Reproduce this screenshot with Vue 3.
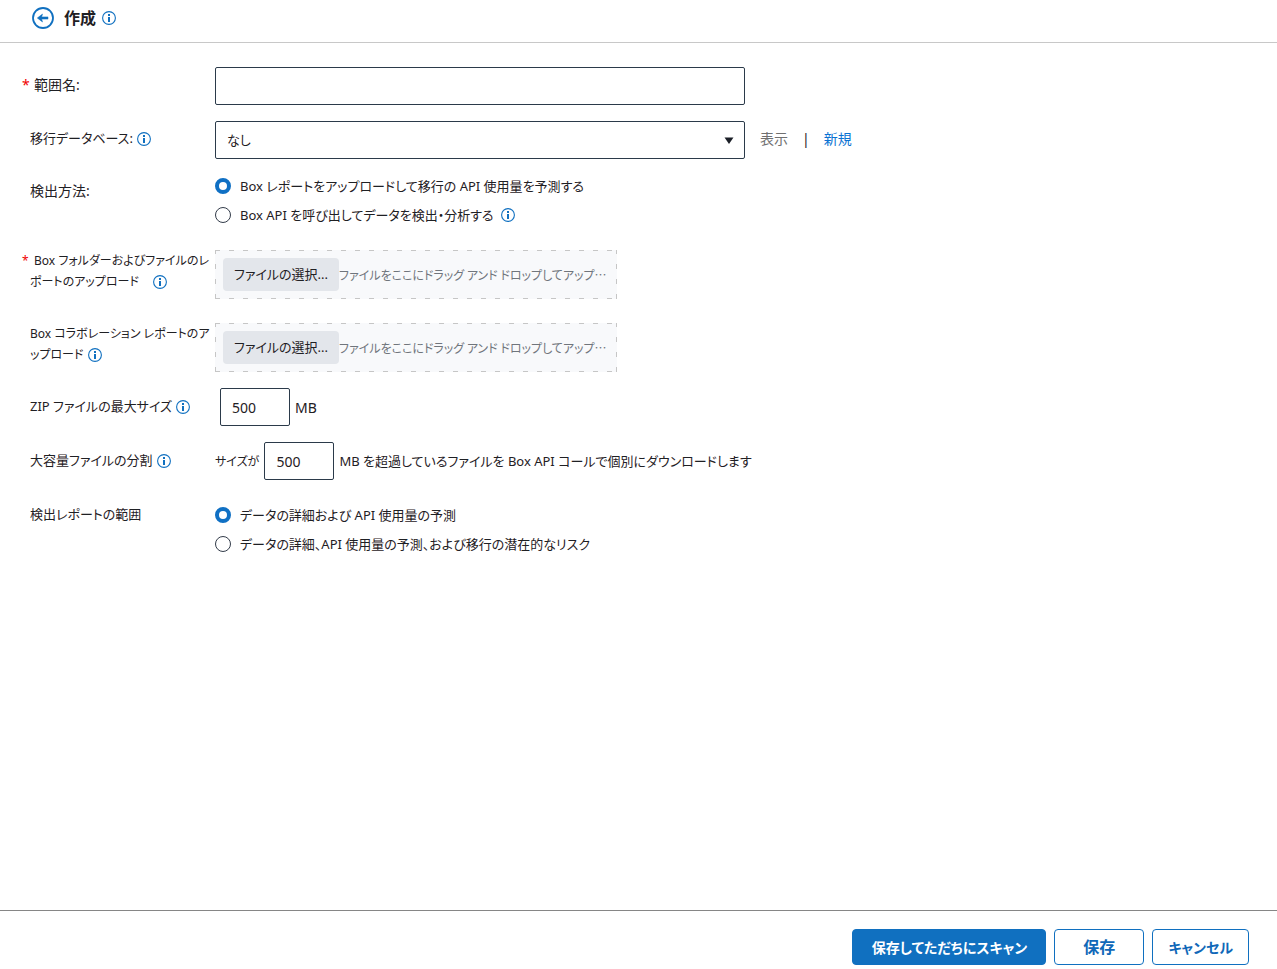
<script setup>
import { ref, h } from 'vue'

const InfoIcon = () =>
  h('svg', { class: 'info', viewBox: '0 0 14 14', width: 14, height: 14, 'aria-hidden': 'true' }, [
    h('circle', { cx: 7, cy: 7, r: 6.4, fill: 'none', stroke: '#1070c0', 'stroke-width': 1.1 }),
    h('path', { d: 'M6 3h2v2H6zM6 6h2v5H6z', fill: '#1070c0' })
  ])

const name = ref('')
const database = ref('none')
const method = ref('report')
const zipSize = ref('500')
const splitSize = ref('500')
const range = ref('basic')
</script>

<template>
  <div class="page">
    <header class="header">
      <button class="back" type="button" aria-label="戻る">
        <svg viewBox="0 0 22 22" width="22" height="22">
          <circle cx="11" cy="11" r="10" fill="none" stroke="#1070c0" stroke-width="1.8" />
          <path d="M5.3 11l5.200-4-.8 2.900H16v2.200H9.700l.8 2.900z" fill="#1070c0" stroke="#1070c0" stroke-width=".5" stroke-linejoin="round" />
        </svg>
      </button>
      <h1>作成</h1>
      <InfoIcon />
    </header>

    <main class="form">
      <div class="row">
        <label class="label field-label large" for="name"><span class="star">*</span>範囲名:</label>
        <input id="name" v-model="name" class="box wide" type="text" />
      </div>

      <div class="row">
        <div class="label field-label"><label for="database">移行データベース:</label><InfoIcon /></div>
        <div class="inline">
          <div class="select-wrap wide">
            <select id="database" v-model="database" class="box">
              <option value="none">なし</option>
            </select>
            <svg class="arrow" viewBox="0 0 10 7" width="10" height="7"><path d="M0.500 0.500h9L5 7z" fill="#1b1f27" /></svg>
          </div>
          <div class="links large">
            <a class="muted" href="#">表示</a>
            <span>|</span>
            <a href="#">新規</a>
          </div>
        </div>
      </div>

      <div class="row">
        <div id="method-label" class="label group-label large">検出方法:</div>
        <div class="radios" role="radiogroup" aria-labelledby="method-label">
          <label class="radio"><input v-model="method" type="radio" name="method" value="report" />Box レポートをアップロードして移行の API 使用量を予測する</label>
          <div class="radio-line">
            <label class="radio"><input v-model="method" type="radio" name="method" value="api" />Box API を呼び出してデータを検出・分析する</label>
            <InfoIcon />
          </div>
        </div>
      </div>

      <div class="row spaced">
        <div class="label compact"><label for="folder-report"><span class="star">*</span>Box フォルダーおよびファイルのレ<br />ポートのアップロード</label><InfoIcon class="far" /></div>
        <div class="drop">
          <button id="folder-report" class="choose" type="button">ファイルの選択...</button>
          <span class="hint">ファイルをここにドラッグ アンド ドロップしてアップ…</span>
        </div>
      </div>

      <div class="row spaced">
        <div class="label compact"><label for="collab-report">Box コラボレーション レポートのア<br />ップロード</label><InfoIcon /></div>
        <div class="drop">
          <button id="collab-report" class="choose" type="button">ファイルの選択...</button>
          <span class="hint">ファイルをここにドラッグ アンド ドロップしてアップ…</span>
        </div>
      </div>

      <div class="row">
        <div class="label size-label"><label for="zip">ZIP ファイルの最大サイズ</label><InfoIcon /></div>
        <div class="inline size zip">
          <input id="zip" v-model="zipSize" class="box small" type="text" />
          <span class="large">MB</span>
        </div>
      </div>

      <div class="row">
        <div class="label size-label"><label for="split">大容量ファイルの分割</label><InfoIcon /></div>
        <div class="inline size">
          <span class="compact">サイズが</span>
          <input id="split" v-model="splitSize" class="box small" type="text" />
          <span>MB を超過しているファイルを Box API コールで個別にダウンロードします</span>
        </div>
      </div>

      <div class="row spaced">
        <div id="range-label" class="label">検出レポートの範囲</div>
        <div class="radios" role="radiogroup" aria-labelledby="range-label">
          <label class="radio"><input v-model="range" type="radio" name="range" value="basic" />データの詳細および API 使用量の予測</label>
          <label class="radio"><input v-model="range" type="radio" name="range" value="risk" />データの詳細、API 使用量の予測、および移行の潜在的なリスク</label>
        </div>
      </div>
    </main>

    <footer class="footer">
      <button class="btn primary" type="button">保存してただちにスキャン</button>
      <button class="btn save" type="button">保存</button>
      <button class="btn" type="button">キャンセル</button>
    </footer>
  </div>
</template>

<style>
body {
  margin: 0;
  background: #fff;
}
</style>

<style scoped>
.page {
  display: flex;
  flex-direction: column;
  min-height: 100vh;
  font-family: "Noto Sans", "Noto Sans CJK JP", sans-serif;
  font-feature-settings: "palt";
  font-size: 13px;
  line-height: 21px;
  color: #1f2024;
}
.page * {
  box-sizing: border-box;
}
button,
input,
select {
  font: inherit;
  font-feature-settings: inherit;
  color: inherit;
  margin: 0;
}
.large {
  font-size: 14px;
}
.compact {
  font-size: 12px;
}
.header {
  display: flex;
  align-items: center;
  height: 43px;
  padding: 0 32px 6px;
  border-bottom: 1px solid #c8c8c8;
}
.back {
  display: flex;
  padding: 0;
  border: 0;
  background: none;
}
h1 {
  margin: 0 6px 0 10px;
  font-size: 16px;
  line-height: 24px;
  font-weight: 700;
}
.form {
  flex: 1;
  display: flex;
  flex-direction: column;
  gap: 16px;
  padding: 24px 0;
}
.row {
  display: grid;
  grid-template-columns: 185px minmax(0, 1fr);
  padding-left: 30px;
}
.spaced {
  margin-top: 8px;
}
.label {
  white-space: nowrap;
}
.field-label {
  padding-top: 7px;
}
.size-label {
  padding-top: 8px;
}
.group-label {
  padding-top: 5px;
}
.star {
  display: inline-block;
  width: 12px;
  margin-left: -8px;
  color: #f00000;
}
.info {
  flex: none;
  vertical-align: -3px;
}
.label .info {
  margin-left: 4px;
}
.label .far {
  margin-left: 14px;
}
.box {
  height: 38px;
  padding: 0 11px;
  border: 1px solid #2b3a4a;
  border-radius: 2px;
  background: #fff;
  font-size: 14px;
}
.wide {
  width: 100%;
  max-width: 530px;
}
.inline {
  display: flex;
  align-items: center;
}
.select-wrap {
  position: relative;
}
.select-wrap .box {
  display: block;
  width: 100%;
  appearance: none;
  font-size: 13px;
}
.arrow {
  position: absolute;
  right: 11px;
  top: 16px;
  pointer-events: none;
}
.links {
  display: flex;
  gap: 14px;
  margin-left: 15px;
  padding-bottom: 4px;
}
a {
  color: #0972d3;
  text-decoration: none;
}
.muted {
  color: #707070;
}
.radios {
  display: flex;
  flex-direction: column;
  align-items: flex-start;
  gap: 7px;
}
.radio,
.radio-line {
  display: flex;
  align-items: center;
  height: 22px;
}
.radio-line {
  gap: 7px;
}
.radio input {
  appearance: none;
  width: 16px;
  height: 16px;
  margin-right: 9px;
  border: 1px solid #333c4a;
  border-radius: 50%;
  background: #fff;
}
.radio input:checked {
  border: 4px solid #1070c4;
}
.drop {
  display: flex;
  align-items: center;
  width: 100%;
  max-width: 402px;
  height: 49px;
  padding: 0 8px;
  background:
    repeating-linear-gradient(90deg, #c6c6c6 0 5px, transparent 5px 14px) 0 0 / 100% 1px no-repeat,
    repeating-linear-gradient(90deg, #c6c6c6 0 5px, transparent 5px 14px) 0 100% / 100% 1px no-repeat,
    repeating-linear-gradient(0deg, #c6c6c6 0 5px, transparent 5px 15px) 0 0 / 1px 100% no-repeat,
    repeating-linear-gradient(0deg, #c6c6c6 0 5px, transparent 5px 15px) 100% 0 / 1px 100% no-repeat,
    #f8f9fb;
}
.choose {
  flex: none;
  width: 116px;
  height: 33px;
  padding: 0;
  border: 0;
  border-radius: 4px;
  background: #e3e6eb;
  white-space: nowrap;
}
.hint {
  color: #70757c;
  font-family: "Noto Sans CJK JP", sans-serif;
  font-size: 12px;
  white-space: nowrap;
}
.size {
  gap: 5px;
}
.zip {
  padding-left: 5px;
}
.small {
  width: 70px;
}
.footer {
  display: flex;
  justify-content: flex-end;
  gap: 8px;
  padding: 18px 28px 4px;
  border-top: 1px solid #868686;
}
.btn {
  height: 36px;
  padding: 0 15px;
  border: 1px solid #1070c0;
  border-radius: 4px;
  background: #fff;
  color: #1068b8;
  font-size: 14px;
  font-weight: 700;
}
.primary {
  min-width: 194px;
  background: #1070c0;
  color: #fff;
}
.save {
  width: 90px;
  font-size: 16px;
}
</style>
